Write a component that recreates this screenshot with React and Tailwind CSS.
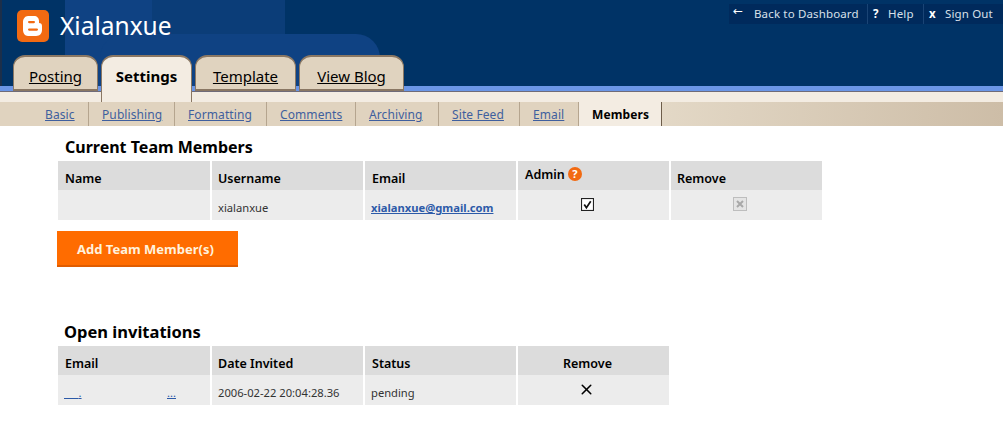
import { X } from "lucide-react";

const font = { fontFamily: '"Noto Sans", "DejaVu Sans", sans-serif' };

const topTabs = [
  { label: "Posting", w: "w-[85px]" },
  { label: "Settings", w: "w-[91px]", active: true },
  { label: "Template", w: "w-[101px]" },
  { label: "View Blog", w: "w-[105px]" },
];

const subTabs = [
  { label: "Basic", w: "w-[89px]", pad: "pl-[45px]" },
  { label: "Publishing", w: "w-[86px]", pad: "pl-[13px]" },
  { label: "Formatting", w: "w-[92px]", pad: "pl-[13px]" },
  { label: "Comments", w: "w-[89px]", pad: "pl-[13px]" },
  { label: "Archiving", w: "w-[83px]", pad: "pl-[13px]" },
  { label: "Site Feed", w: "w-[81px]", pad: "pl-[13px]" },
  { label: "Email", w: "w-[59px]", pad: "pl-[13px]" },
];

function Logo() {
  return (
    <svg width="32" height="32" viewBox="0 0 32 32" className="shrink-0">
      <rect width="32" height="32" rx="5" fill="#f26a12" />
      <path
        d="M11 6h6c3 0 5 2 5 5v2c2 0 3 1 3 3v4c0 3-2 6-6 6h-8c-3 0-5-3-5-6v-8c0-3 2-6 5-6z"
        fill="#fff"
      />
      <rect x="11" y="11" width="7" height="2.2" rx="1.1" fill="#f26a12" />
      <rect x="11" y="18.5" width="10" height="2.2" rx="1.1" fill="#f26a12" />
    </svg>
  );
}

function Header() {
  return (
    <div className="relative h-[86px] bg-[#003366]">
      {/* faded blobs behind the logo */}
      <div className="absolute inset-0 overflow-hidden border-l-2 border-[#1c2f4a]">
        <div className="absolute left-[63px] top-[-30px] w-[142px] h-[116px] rounded-[30px] bg-[#0f4283]" />
        <div className="absolute left-[150px] top-[-30px] w-[133px] h-[116px] rounded-[30px] bg-[#0b3d78]" />
        <div className="absolute left-[98px] top-[34px] w-[280px] h-[52px] rounded-t-[24px] bg-[#0f4283]" />
      </div>

      <div className="relative flex items-center gap-[11px] pl-[17px] pt-[10px]">
        <Logo />
        <span className="text-[24.5px] leading-[32px] text-white">Xialanxue</span>
      </div>

      <div className="absolute right-0 top-[4px] flex h-[20px] bg-[#002a5c] text-[11.5px] leading-[20px] tracking-[0.15px] text-[#d8e0ea] whitespace-nowrap">
        <div className="flex pl-[4px] w-[139px] border-r border-[#1a4475]">
          <span className="w-[21px] text-white text-[12px] leading-[14px]">←</span>
          <span>Back to Dashboard</span>
        </div>
        <div className="flex pl-[5px] w-[56px] border-r border-[#1a4475]">
          <span className="w-[15px] font-bold text-white">?</span>
          <span>Help</span>
        </div>
        <div className="flex pl-[5px] w-[79px]">
          <span className="w-[16px] font-bold text-white">x</span>
          <span>Sign Out</span>
        </div>
      </div>

      <div className="absolute left-[13px] top-[55px] z-10 flex gap-[3px] items-start">
        {topTabs.map((t) => (
          <a
            key={t.label}
            className={
              t.w +
              " rounded-t-[12px] border-t-2 border-x border-[#8a7763] flex justify-center pt-[8px] text-[15px] leading-[22px] text-black " +
              (t.active ? "h-[47px] bg-[#f3ece2] font-bold border-b-0" : "h-[36px] bg-[#e0d3bf] underline border-b-2")
            }
          >
            {t.label}
          </a>
        ))}
      </div>
    </div>
  );
}

function SubNav() {
  return (
    <div>
      <div className="h-[5px] bg-[#6b96e6]" />
      <div className="h-px bg-[#6f6b78]" />
      <div className="h-[10px] bg-[#f3ece2]" />
      <div className="flex h-[24px] text-[12px] leading-[26px] tracking-[0.1px] text-[#3f5f9e]">
        {subTabs.map((t) => (
          <a key={t.label} className={t.w + " " + t.pad + " bg-[#e0d3bf] border-r border-[#b5a58f] underline"}>
            {t.label}
          </a>
        ))}
        <span className="w-[83px] pl-[13px] bg-[#f3ece2] border-r border-[#6d5d4a] font-bold text-black">Members</span>
        <div className="flex-1 bg-gradient-to-r from-[#e3d8c6] to-[#cdbda7]" />
      </div>
    </div>
  );
}

function Row({ cols, head, children }) {
  return (
    <div className={cols + " grid gap-x-[2px] " + (head ? "h-[29px]" : "h-[30px]")}>
      {children}
    </div>
  );
}

function HeadCell({ children, shift, tight }) {
  const pad = shift ? "text-center pr-[12px]" : tight ? "pl-[6px]" : "pl-[7px]";
  return (
    <div className={"h-[29px] bg-[#dcdcdc] pt-[6px] text-[12.5px] leading-[24px] font-semibold text-black " + pad}>
      {children}
    </div>
  );
}

function Cell({ children, shift }) {
  return (
    <div className={"h-[30px] bg-[#ececec] pt-[6px] text-[11.2px] leading-[23px] text-[#333] " + (shift ? "flex justify-center " + shift : "pl-[6px]")}>
      {children}
    </div>
  );
}

export default function App() {
  const members = "grid-cols-[152px_151px_151px_151px_151px]";
  const invites = "grid-cols-[152px_151px_151px_151px]";

  return (
    <div className="min-h-[434px] bg-white overflow-hidden" style={font}>
      <Header />
      <SubNav />

      <div className="pl-[58px]">
        <h2 className="pl-[7px] pt-[11px] text-[16px] leading-[20px] h-[35px] font-bold text-black">Current Team Members</h2>
        <div className="w-[764px]">
          <Row cols={members} head>
            <HeadCell>Name</HeadCell>
            <HeadCell tight>Username</HeadCell>
            <HeadCell>Email</HeadCell>
            <div className="bg-[#dcdcdc] pl-[7px] flex items-center gap-[3px] h-[29px] pb-[1px] text-[12.5px] font-semibold text-black">
              Admin
              <span className="w-[14px] h-[14px] mt-[-2px] rounded-full bg-[#f26a12] text-white text-[11px] leading-[14px] font-bold text-center">?</span>
            </div>
            <HeadCell tight>Remove</HeadCell>
          </Row>
          <Row cols={members}>
            <Cell />
            <Cell>xialanxue</Cell>
            <Cell>
              <a className="font-bold text-[#2c5aa8] underline">xialanxue@gmail.com</a>
            </Cell>
            <Cell shift="pr-[12px]">
              <svg width="13" height="13" viewBox="0 0 12 12" className="mt-[2px]">
                <rect x=".5" y=".5" width="11" height="11" fill="#fff" stroke="#222" />
                <path d="M3 6l2 3 4-6" fill="none" stroke="#111" strokeWidth="1.6" />
              </svg>
            </Cell>
            <Cell shift="pr-[14px]">
              <svg width="14" height="14" viewBox="0 0 14 14" className="mt-[1px]">
                <rect x=".5" y=".5" width="13" height="13" fill="#e4e4e4" stroke="#bdbdbd" />
                <path d="M4 4l6 6M10 4l-6 6" stroke="#a8a8a8" strokeWidth="2" />
              </svg>
            </Cell>
          </Row>
        </div>

        <button className="block mt-[11px] -ml-px w-[181px] h-[36px] pt-[3px] bg-[#ff6c00] border-b-2 border-[#e05c00] text-left pl-[20px] text-[13px] font-bold text-[#fff2dd]">
          Add Team Member(s)
        </button>

        <h2 className="pl-[6px] mt-[55px] text-[16.5px] leading-[20px] h-[20px] font-bold text-black">Open invitations</h2>
        <div className="w-[611px] mt-[4px]">
          <Row cols={invites} head>
            <HeadCell>Email</HeadCell>
            <HeadCell tight>Date Invited</HeadCell>
            <HeadCell>Status</HeadCell>
            <HeadCell shift>Remove</HeadCell>
          </Row>
          <Row cols={invites}>
            <Cell>
              <span className="flex">
                <a className="w-[103px] text-[#2c5aa8] underline">{"\u00a0\u00a0\u00a0\u00a0\u00a0"}.</a>
                <a className="text-[#2c5aa8] underline">...</a>
              </span>
            </Cell>
            <Cell>2006-02-22 20:04:28.36</Cell>
            <Cell>pending</Cell>
            <Cell shift="pr-[14px]">
              <X size={17} strokeWidth={2.2} color="#000" />
            </Cell>
          </Row>
        </div>
      </div>
    </div>
  );
}
